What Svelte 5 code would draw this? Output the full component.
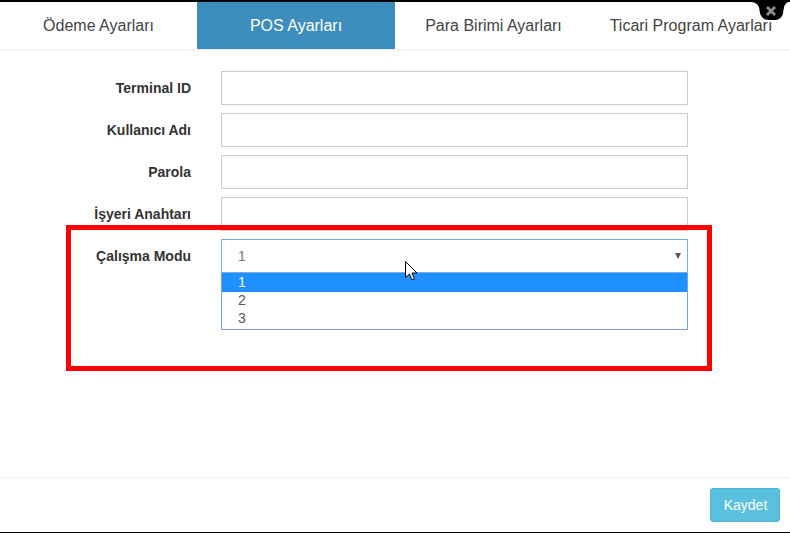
<script>
  const tabs = ['Ödeme Ayarları', 'POS Ayarları', 'Para Birimi Ayarları', 'Ticari Program Ayarları'];
  const fields = ['Terminal ID', 'Kullanıcı Adı', 'Parola', 'İşyeri Anahtarı'];
  const modes = ['1', '2', '3'];
  let activeTab = $state(1);
  let mode = $state('1');
</script>

<div class="modal">
  <nav class="tabs">
    {#each tabs as tab, i}
      <button class="tab" class:active={activeTab === i} onclick={() => (activeTab = i)}>{tab}</button>
    {/each}
  </nav>

  <form class="form">
    {#each fields as field}
      <div class="row">
        <span class="label">{field}</span>
        <input class="input" type="text" />
      </div>
    {/each}

    <div class="row">
      <span class="label">Çalışma Modu</span>
      <div class="dropdown">
        <div class="current">
          <span class="value">{mode}</span>
          <span class="arrow"></span>
        </div>
        <ul class="options">
          {#each modes as m}
            <li class:selected={m === mode}>{m}</li>
          {/each}
        </ul>
      </div>
    </div>
  </form>

  <footer class="footer">
    <button class="save">Kaydet</button>
  </footer>

  <!-- close button, red annotation and cursor sit on top of the form -->
  <svg class="close" width="40" height="20" viewBox="0 0 40 20">
    <path d="M2 0 Q9 1 9.5 8 Q10 17 18 18 L26 18 Q33 17 33.5 8 Q34 2 38 0 Z" fill="#000" />
    <path d="M17 5 L25 13 M25 5 L17 13" stroke="#8c8c8c" stroke-width="3" />
  </svg>
  <div class="highlight"></div>
  <svg class="cursor" width="13" height="21" viewBox="0 0 13 21">
    <path d="M0.5 0.5 L0.5 16.5 L4.5 13 L7 19 L9.5 18 L7 12 L12 12 Z" fill="#fff" stroke="#000" stroke-width="1" />
  </svg>
</div>

<style>
  :global(body) {
    margin: 0;
    background: #fff;
  }

  .modal {
    position: relative;
    width: 790px;
    height: 533px;
    box-sizing: border-box;
    border-top: 2px solid #000;
    border-bottom: 1px solid #000;
    display: flex;
    flex-direction: column;
    overflow: hidden;
    font-family: 'Liberation Sans', Arial, sans-serif;
    color: #333;
  }

  .tabs {
    display: grid;
    grid-template-columns: 197px 198px 197px 198px;
    height: 47px;
    border-bottom: 2px solid #f4f4f4;
    flex: none;
  }

  .tab {
    border: none;
    background: #fff;
    padding: 0;
    font: 16px 'Liberation Sans', Arial, sans-serif;
    color: #444;
    white-space: nowrap;
  }

  .tab.active {
    background: #3c8dbc;
    color: #fff;
  }

  .form {
    flex: 1;
    padding-top: 20px;
    display: flex;
    flex-direction: column;
    gap: 8px;
  }

  .row {
    display: flex;
    align-items: flex-start;
    gap: 30px;
  }

  .label {
    width: 191px;
    flex: none;
    text-align: right;
    font-size: 14px;
    font-weight: 700;
    line-height: 34px;
  }

  .input {
    width: 467px;
    height: 34px;
    box-sizing: border-box;
    border: 1px solid #ccc;
    padding: 6px 12px;
    outline: none;
    background: #fff;
  }

  .dropdown {
    width: 467px;
    font-size: 14px;
    color: #555;
  }

  .current {
    height: 34px;
    box-sizing: border-box;
    border: 1px solid #74aeea;
    padding: 0 6px 0 17px;
    display: flex;
    align-items: center;
    justify-content: space-between;
  }

  .value {
    margin-left: -1px;
    color: #777;
  }

  .arrow {
    width: 0;
    height: 0;
    border-left: 3.5px solid transparent;
    border-right: 3.5px solid transparent;
    border-top: 6px solid #555;
  }

  .options {
    list-style: none;
    margin: 0;
    padding: 0 0 1px;
    border: 1px solid #7aa0e4;
    border-top: none;
  }

  .options li {
    height: 18px;
    line-height: 16px;
    padding-left: 16px;
  }

  .options li.selected {
    height: 19px;
    line-height: 18px;
    background: #1e90ff;
    color: #fff;
  }

  .footer {
    flex: none;
    height: 55px;
    border-top: 1px solid #f4f4f4;
    display: flex;
    justify-content: flex-end;
    align-items: flex-start;
    padding: 10px 10px 0 0;
    box-sizing: border-box;
  }

  .save {
    width: 70px;
    height: 34px;
    border: 1px solid #46b8da;
    border-radius: 3px;
    background: #5bc0de;
    color: #fff;
    font: 14px 'Liberation Sans', Arial, sans-serif;
    padding: 0 0 0 1px;
  }

  .close {
    position: absolute;
    top: 0;
    left: 750px;
  }

  .highlight {
    position: absolute;
    left: 66px;
    top: 223px;
    width: 646px;
    height: 146px;
    box-sizing: border-box;
    border: 5px solid #f00;
    pointer-events: none;
  }

  .cursor {
    position: absolute;
    left: 405px;
    top: 259px;
  }
</style>
